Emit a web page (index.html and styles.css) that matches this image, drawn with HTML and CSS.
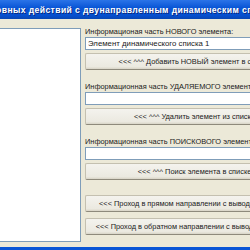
FILE: index.html
```html
<!DOCTYPE html>
<html lang="ru">
  <head>
    <meta charset="UTF-8" />
    <title>Двунаправленный динамический список</title>
    <link rel="stylesheet" href="styles.css">
  </head>
  <body>
    <div class="window">
      <div class="titlebar">
        <span class="title">Демонстрация основных действий с двунаправленным динамическим списком</span>
      </div>
      <div class="client">
        <div class="listbox"></div>
        <div class="panel">
          <div class="group">
            <div class="label">Информационая часть НОВОГО элемента:</div>
            <div class="edit">Элемент динамического списка 1</div>
            <div class="btn">&lt;&lt;&lt; ^^^ Добавить НОВЫЙ элемент в список</div>
          </div>
          <div class="group">
            <div class="label">Информационная часть УДАЛЯЕМОГО элемента:</div>
            <div class="edit"></div>
            <div class="btn">&lt;&lt;&lt; ^^^ Удалить элемент из списка</div>
          </div>
          <div class="group">
            <div class="label">Информационная часть ПОИСКОВОГО элемента:</div>
            <div class="edit"></div>
            <div class="btn">&lt;&lt;&lt; ^^^ Поиск элемента в списке</div>
          </div>
          <div class="walk">
            <div class="btn">&lt;&lt;&lt; Проход в прямом направлении с выводом в список</div>
            <div class="btn">&lt;&lt;&lt; Проход в обратном направлении с выводом в список</div>
          </div>
        </div>
      </div>
      <div class="bottom"></div>
    </div>
  </body>
</html>
```

FILE: styles.css
```css
* {
  margin: 0;
  padding: 0;
  box-sizing: border-box;
}

body,
html {
  width: 250px;
  height: 250px;
  overflow: hidden;
  background: #ece9d8;
  font-family: "Liberation Sans", Arial, sans-serif;
}

.window {
  width: 330px;
  height: 250px;
  display: flex;
  flex-direction: column;
}

.titlebar {
  height: 19px;
  background: linear-gradient(#2b74e8, #0a56d6 40%, #0550d0 80%, #0846b4);
  color: white;
  font-size: 8.6px;
  font-weight: bold;
  letter-spacing: 0.4px;
  line-height: 20px;
  white-space: nowrap;
  overflow: hidden;
}

.title {
  display: block;
  margin-left: -90px;
  text-shadow: 1px 1px 0 #0a2a80;
}

.client {
  flex: 1;
  display: flex;
  gap: 4px;
  padding-top: 8px;
  padding-bottom: 5px;
}

.listbox {
  width: 82px;
  margin-left: -1px;
  margin-top: 1px;
  background: white;
  border: 1px solid #7f9db9;
}

.panel {
  width: 219px;
  display: flex;
  flex-direction: column;
  font-size: 7.4px;
  color: #1a1a1a;
}

.group {
  display: flex;
  flex-direction: column;
  margin-bottom: 12px;
}

.label {
  height: 9px;
  line-height: 9px;
  margin-bottom: 1px;
  white-space: nowrap;
}

.edit {
  height: 13px;
  background: white;
  border: 1px solid #7f9db9;
  line-height: 11px;
  padding-left: 2px;
  font-size: 7.8px;
  white-space: nowrap;
  margin-bottom: 3px;
}

.btn {
  height: 17px;
  line-height: 15px;
  text-align: center;
  white-space: nowrap;
  background: linear-gradient(#f4f3ee, #ebe9e0 85%, #d8d4c6);
  border: 1px solid #c4c0b0;
  border-bottom-color: #8e8a7c;
  border-right-color: #8e8a7c;
  border-radius: 2px;
}

.walk {
  display: flex;
  flex-direction: column;
  gap: 6px;
  margin-top: 3px;
}

.bottom {
  height: 3px;
  background: #0a56d6;
}
```
